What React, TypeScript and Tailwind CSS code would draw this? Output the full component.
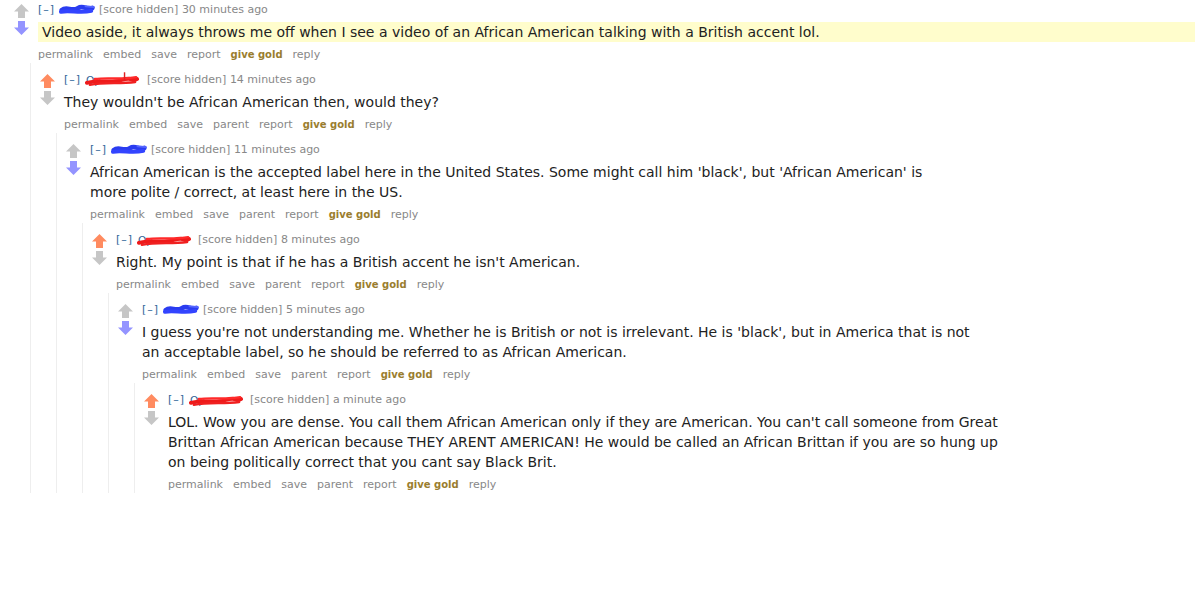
import React from "react";

type C = {
    up: boolean
    uw: number
    user: "blue" | "red" | "red2"
    time: string
    body: string
    parent?: boolean
    highlight?: boolean
    child?: C
}

const UpArrow: React.FC<{ color: string }> = ({ color }) =>
    <svg width="15" height="14" viewBox="0 0 15 14"><polygon points="7.5,0 15,7.5 11,7.5 11,14 4,14 4,7.5 0,7.5" fill={color} /></svg>

const DownArrow: React.FC<{ color: string }> = ({ color }) =>
    <svg width="15" height="14" viewBox="0 0 15 14"><polygon points="4,0 11,0 11,6.5 15,6.5 7.5,14 0,6.5 4,6.5" fill={color} /></svg>

// scribbled-over usernames
const Scribble: React.FC<{ kind: "blue" | "red" | "red2", w: number }> = ({ kind, w }) => {
    if (kind === "blue") return <svg width={w} height="14" viewBox="0 0 38 14">
        <path d="M3 7 C 8 3, 14 9, 20 5 S 30 8, 35 5" stroke="#2a3cf0" strokeWidth="5" fill="none" strokeLinecap="round" />
        <path d="M2 9 C 12 7, 22 11, 34 8" stroke="#3344ff" strokeWidth="4" fill="none" strokeLinecap="round" />
        <path d="M28 3 L37 4" stroke="#5566ff" strokeWidth="2" strokeLinecap="round" />
    </svg>
    return <svg width={w} height="16" viewBox="0 0 56 16">
        <text x="1" y="12" fontSize="11" fill="#369" fontFamily="DejaVu Sans">Op</text>
        <path d="M2 11 C 14 7, 26 12, 38 8 S 48 10, 54 7" stroke="#ee1a1a" strokeWidth="4" fill="none" strokeLinecap="round" />
        <path d="M5 13 C 20 10, 34 12, 52 10" stroke="#f02020" strokeWidth="2.5" fill="none" strokeLinecap="round" />
        <path d="M10 7 C 24 5, 38 8, 53 5" stroke="#ff2a2a" strokeWidth="2.5" fill="none" strokeLinecap="round" />
        {kind === "red" && <path d="M41 0 L41 9" stroke="#e02020" strokeWidth="1.5" />}
    </svg>
}

const Comment: React.FC<{ c: C, first?: boolean }> = ({ c, first }) => {
    const links = c.parent
        ? ["permalink", "embed", "save", "parent", "report"]
        : ["permalink", "embed", "save", "report"]
    return <div className={first ? "flex flex-col pt-[3px]" : "flex flex-col pt-[10px]"}>
        <div className="flex">
            <div className="w-[33px] shrink-0 pl-[9px] pt-[1px] flex flex-col gap-[3px]">
                <UpArrow color={c.up ? "#ff8b60" : "#c6c6c6"} />
                <DownArrow color={c.up ? "#c6c6c6" : "#9494ff"} />
            </div>
            <div className="flex-1 flex flex-col">
                <div className="h-[14px] leading-[14px] text-[11px] flex items-center whitespace-nowrap">
                    <span className="w-[17px] text-[#369] tracking-[1px]">[–]</span>
                    <span className="ml-[4px] flex items-center" style={{ width: c.uw }}>
                        <Scribble kind={c.user} w={c.user === "blue" ? 36 : 54} />
                    </span>
                    <span className="text-[#888]">[score hidden] {c.time}</span>
                </div>
                <div className={c.highlight ? "mt-[5px] bg-[#fffdcc] pl-[4px]" : "mt-[5px]"}>
                    <p className="max-w-[840px] text-[14px] leading-[20px] text-[#222]">{c.body}</p>
                </div>
                <ul className="mt-[5px] h-[16px] flex items-center gap-[10px] text-[11px] leading-[16px] text-[#888] whitespace-nowrap">
                    {links.map(l => <li key={l}>{l}</li>)}
                    <li className="text-[10px] font-bold text-[#9a7d2e]">give gold</li>
                    <li>reply</li>
                </ul>
            </div>
        </div>
        {c.child && <div className="ml-[25px] border-l border-[#eeeeee]">
            <Comment c={c.child} />
        </div>}
    </div>
}

const thread: C = {
    up: false, uw: 40, user: "blue", time: "30 minutes ago", highlight: true,
    body: "Video aside, it always throws me off when I see a video of an African American talking with a British accent lol.",
    child: {
        up: true, uw: 62, user: "red", time: "14 minutes ago", parent: true,
        body: "They wouldn't be African American then, would they?",
        child: {
            up: false, uw: 40, user: "blue", time: "11 minutes ago", parent: true,
            body: "African American is the accepted label here in the United States. Some might call him 'black', but 'African American' is more polite / correct, at least here in the US.",
            child: {
                up: true, uw: 61, user: "red2", time: "8 minutes ago", parent: true,
                body: "Right. My point is that if he has a British accent he isn't American.",
                child: {
                    up: false, uw: 40, user: "blue", time: "5 minutes ago", parent: true,
                    body: "I guess you're not understanding me. Whether he is British or not is irrelevant. He is 'black', but in America that is not an acceptable label, so he should be referred to as African American.",
                    child: {
                        up: true, uw: 61, user: "red2", time: "a minute ago", parent: true,
                        body: "LOL. Wow you are dense. You call them African American only if they are American. You can't call someone from Great Brittan African American because THEY ARENT AMERICAN! He would be called an African Brittan if you are so hung up on being politically correct that you cant say Black Brit.",
                    },
                },
            },
        },
    },
}

const App: React.FC = () => {
    return <div className="w-[1195px] h-[600px] bg-white pl-[5px] font-['DejaVu_Sans',Verdana,sans-serif] overflow-hidden">
        <Comment c={thread} first />
    </div>
}
export default App;
